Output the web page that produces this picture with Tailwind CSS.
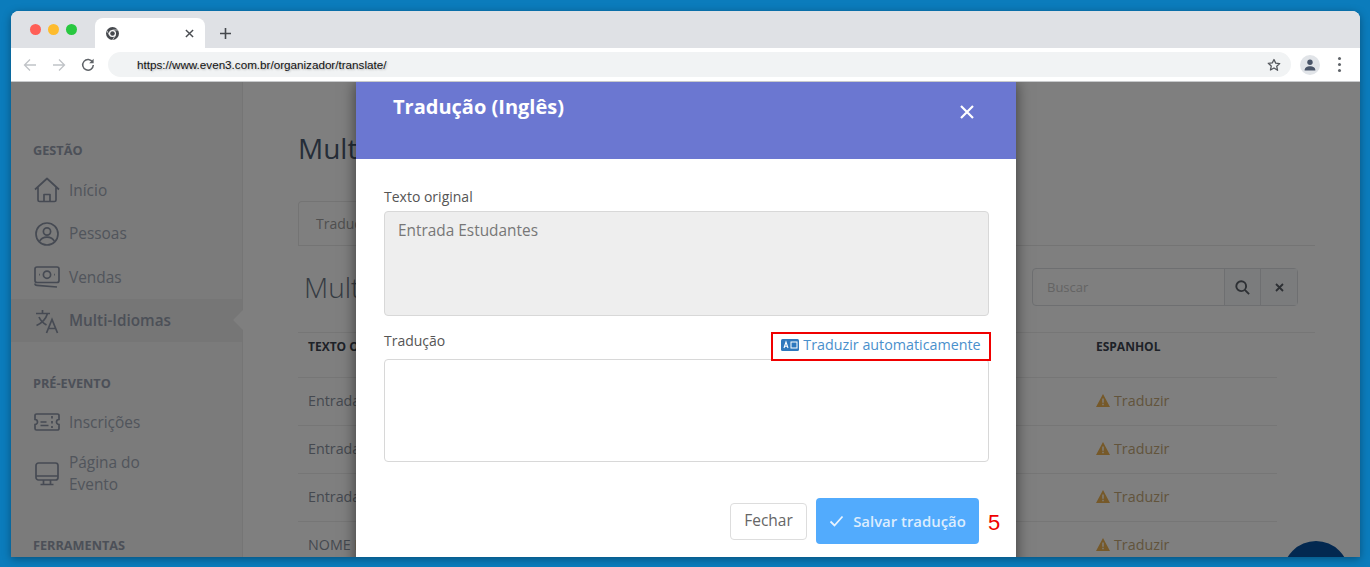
<!DOCTYPE html>
<html lang="pt-BR">
<head>
  <meta charset="UTF-8">
  <title>Even3 - Multi-Idiomas</title>
  <script src="https://cdn.jsdelivr.net/npm/@tailwindcss/browser@4"></script>
</head>
<body class="bg-[#0b7cbc] h-[567px] overflow-hidden pt-[11px] pl-[11px] pr-[10px] font-['Open_Sans',sans-serif]">

  <div class="relative h-[546px] flex flex-col overflow-hidden rounded-t-lg bg-white shadow-[0_2px_8px_rgba(0,0,0,0.35)]">

    <!-- abas do navegador -->
    <div class="h-[37px] shrink-0 bg-[#dfe1e5] flex items-end pr-px">
      <div class="h-full flex items-center gap-[7px] pl-[19px] pt-[1px] pb-[1px] -mt-1">
        <span class="w-[11px] h-[11px] rounded-full bg-[#ff5f57]"></span>
        <span class="w-[11px] h-[11px] rounded-full bg-[#febc2e]"></span>
        <span class="w-[11px] h-[11px] rounded-full bg-[#28c840]"></span>
      </div>
      <div class="ml-[18px] w-[110px] h-[30px] bg-white rounded-t-lg flex items-center justify-between pl-[11px] pr-[11px]">
        <svg class="w-[13px] h-[13px]" viewBox="0 0 24 24"><circle cx="12" cy="12" r="12" fill="#46494e"/><circle cx="12" cy="12" r="6.5" fill="#fff"/><circle cx="12" cy="12" r="4.2" fill="#46494e"/><path d="M12 5.5h11M6.4 15.3L1.5 6.5M17.6 15.3L12 24" stroke="#fff" stroke-width="1.2"/></svg>
        <svg class="w-[9px] h-[9px]" viewBox="0 0 10 10"><path d="M1 1l8 8M9 1l-8 8" stroke="#4a4d52" stroke-width="1.6"/></svg>
      </div>
      <div class="h-[30px] flex items-center ml-[15px]">
        <svg class="w-[11px] h-[11px]" viewBox="0 0 11 11"><path d="M5.5 0v11M0 5.5h11" stroke="#45484d" stroke-width="1.6"/></svg>
      </div>
    </div>

    <!-- barra de endereço -->
    <div class="h-[34px] shrink-0 bg-white border-b border-[#c8cacc] flex items-center pl-[12px] pr-[19px]">
      <svg class="w-[14px] h-[14px]" viewBox="0 0 14 14" fill="none"><path d="M13 7H1.5M7 1.5L1.5 7 7 12.5" stroke="#c0c3c7" stroke-width="1.3"/></svg>
      <svg class="w-[14px] h-[14px] ml-[15px]" viewBox="0 0 14 14" fill="none"><path d="M1 7h11.5M7 1.5L12.5 7 7 12.5" stroke="#c0c3c7" stroke-width="1.3"/></svg>
      <svg class="w-[14px] h-[14px] ml-[15px]" viewBox="0 0 14 14" fill="none"><path d="M11.6 4.2A5.3 5.3 0 1 0 12.3 7" stroke="#5f6368" stroke-width="1.5"/><path d="M12.6 0.8v4.4H8.2z" fill="#5f6368"/></svg>
      <div class="ml-[13px] flex-1 h-[25px] rounded-full bg-[#f1f3f4] flex items-center justify-between pl-[29px] pr-[10px]">
        <span class="font-['Liberation_Sans',sans-serif] text-[11.67px] text-[#111] [text-shadow:1px_1px_2px_rgba(0,0,0,0.25)]">https://www.even3.com.br/organizador/translate/</span>
        <svg class="w-[14px] h-[14px]" viewBox="0 0 24 24" fill="none"><path d="M12 2.5l2.9 6.3 6.9.8-5.1 4.7 1.4 6.8L12 17.1l-6.1 3.5 1.4-6.8-5.1-4.7 6.9-.8z" stroke="#55585d" stroke-width="2.2" stroke-linejoin="round"/></svg>
      </div>
      <div class="ml-[9px] w-[20px] h-[20px] rounded-full bg-[#e1e4e8] flex items-center justify-center">
        <svg class="w-[12px] h-[12px]" viewBox="0 0 12 12"><circle cx="6" cy="3.2" r="2.7" fill="#4a5568"/><path d="M.6 11.5c0-3 2.6-4.2 5.4-4.2s5.4 1.2 5.4 4.2z" fill="#4a5568"/></svg>
      </div>
      <div class="ml-[18px] flex flex-col gap-[3px]">
        <span class="w-[3px] h-[3px] rounded-full bg-[#5f6368]"></span>
        <span class="w-[3px] h-[3px] rounded-full bg-[#5f6368]"></span>
        <span class="w-[3px] h-[3px] rounded-full bg-[#5f6368]"></span>
      </div>
    </div>

    <!-- pagina -->
    <div class="relative flex-1 flex overflow-hidden bg-white">

      <aside class="w-[232px] shrink-0 bg-[#f6f6f6] border-r border-[#eaeaea] pt-[59px] text-[#a2aab8]">
        <p class="pl-[22px] h-[18px] leading-[18px] text-[12.7px] font-bold text-[#98a0b0] mb-[9.5px]">GESTÃO</p>

        <div class="h-[43.5px] flex items-center pl-[23px] gap-[9px] text-[15.4px]">
          <svg class="w-[26px] h-[26px] shrink-0" viewBox="0 0 26 26" fill="none" stroke="#8c95a6" stroke-width="1.7" stroke-linejoin="round"><path d="M1 12.5L13 1.5l12 11M4 10.5V23a1.5 1.5 0 0 0 1.5 1.5h15A1.5 1.5 0 0 0 22 23V10.5M10 24.5v-7h6v7"/></svg>
          Início
        </div>
        <div class="h-[43.5px] flex items-center pl-[23px] gap-[9px] text-[15.4px]">
          <svg class="w-[26px] h-[26px] shrink-0" viewBox="0 0 26 26" fill="none" stroke="#8c95a6" stroke-width="1.7"><circle cx="13" cy="13" r="11"/><circle cx="13" cy="10.5" r="3.6"/><path d="M5.5 20.5c1.5-3.2 4.3-4.4 7.5-4.4s6 1.2 7.5 4.4"/></svg>
          Pessoas
        </div>
        <div class="h-[43.5px] flex items-center pl-[23px] gap-[9px] text-[15.4px]">
          <svg class="w-[26px] h-[26px] shrink-0" viewBox="0 0 26 26" fill="none" stroke="#8c95a6" stroke-width="1.7"><rect x="1" y="3" width="24" height="15.5" rx="2"/><circle cx="13" cy="10.7" r="3.6"/><path d="M5 10.7h.8M20.2 10.7h.8M1 19.5c0 1.2.6 1.9 2 1.9l20 1.6"/></svg>
          Vendas
        </div>
        <div class="relative h-[43px] bg-[#ececec] flex items-center pl-[23px] gap-[9px] text-[15.3px] font-semibold text-[#98a0b0]">
          <svg class="w-[26px] h-[26px] shrink-0" viewBox="0 0 26 26" fill="none" stroke="#8c95a6" stroke-width="1.7"><path d="M2 5.5h14M8.5 2v3.5M13.5 5.5c-1.5 5-5.5 9.5-11 12M5 9c1.5 3.5 4 6 7.5 8M12.5 25l5.5-13.5L23.5 25M14.5 20.500h7"/></svg>
          Multi-Idiomas
          <span class="absolute right-[-8px] top-[14px] w-[14px] h-[14px] rotate-45 bg-white"></span>
        </div>

        <p class="mt-[32px] pl-[22px] h-[18px] leading-[18px] text-[12.7px] font-bold text-[#98a0b0] mb-[8.5px]">PRÉ-EVENTO</p>
        <div class="h-[43.5px] flex items-center pl-[23px] gap-[9px] text-[15.4px]">
          <svg class="w-[26px] h-[26px] shrink-0" viewBox="0 0 26 26" fill="none" stroke="#8c95a6" stroke-width="1.7"><path d="M2.5 5h21A1.5 1.5 0 0 1 25 6.5v4a2.5 2.5 0 0 0 0 5v4a1.5 1.5 0 0 1-1.5 1.5h-21A1.5 1.5 0 0 1 1 19.500v-4a2.500 2.500 0 0 0 0-5v-4A1.500 1.500 0 0 1 2.500 5zM18 7v2.500M18 12v2.500M18 17v2M6.500 13h6M6.500 16.500h8"/></svg>
          Inscrições
        </div>
        <div class="h-[44px] mt-[8px] flex items-center pl-[23px] gap-[9px] text-[15.4px] leading-[22px]">
          <svg class="w-[26px] h-[26px] shrink-0" viewBox="0 0 26 26" fill="none" stroke="#8c95a6" stroke-width="1.7"><rect x="2" y="2" width="22" height="17" rx="2.500"/><path d="M2 15h22M9.500 19v4M16.500 19v4M6.500 23.500h13"/></svg>
          <span>Página do<br>Evento</span>
        </div>

        <p class="mt-[39.5px] pl-[22px] h-[18px] leading-[18px] text-[12.7px] font-bold text-[#98a0b0]">FERRAMENTAS</p>
      </aside>

      <main class="flex-1 pl-[55px] pr-[45px] pt-[47px]">
        <h1 class="text-[28px] leading-[38px] text-[#4a5a70]">Multi-Idiomas</h1>

        <div class="mt-[35px] h-[44px] border-b border-[#e8e8e8] flex items-end">
          <div class="h-[44px] px-[17px] flex items-center border border-b-0 border-[#e8e8e8] rounded-t text-[14px] text-[#a0a0a0] bg-white">Tradução</div>
        </div>

        <div class="mt-[22px] h-[38px] flex items-center justify-between pr-[17px]">
          <h2 class="pl-[6px] text-[28px] font-light text-[#6b7685]">Multi-Idiomas</h2>
          <div class="w-[266px] h-[38px] flex border border-[#dcdfe2] rounded">
            <div class="flex-1 flex items-center pl-[14px] text-[13px] text-[#c8c8c8] pt-px">Buscar</div>
            <div class="w-[36px] flex items-center justify-center bg-[#f6f8fa] border-l border-[#dcdfe2]">
              <svg class="w-[15px] h-[15px]" viewBox="0 0 15 15" fill="none" stroke="#5b6068" stroke-width="1.900"><circle cx="6.200" cy="6.200" r="4.900"/><path d="M9.800 9.800l4.300 4.300"/></svg>
            </div>
            <div class="w-[37px] flex items-center justify-center bg-[#f6f8fa] border-l border-[#dcdfe2]">
              <svg class="w-[9px] h-[9px]" viewBox="0 0 9 9"><path d="M1 1l7 7M8 1L1 8" stroke="#5b6068" stroke-width="1.800"/></svg>
            </div>
          </div>
        </div>

        <div class="mt-[26px] border-t border-[#ececec] h-[45px] grid grid-cols-[788px_1fr] pl-[10px] pt-[5px] text-[12px] font-bold text-[#3c4450]">
          <span>TEXTO ORIGINAL</span>
          <span>ESPANHOL</span>
        </div>

        <div class="w-[979px] text-[14.3px] text-[#8a92a0]">
          <div class="h-[48px] grid grid-cols-[788px_1fr] pl-[10px] pb-[2px] items-center border-t border-[#ececec]">
            <span>Entrada Estudantes</span>
            <span class="flex items-center gap-[4px] text-[#c4a878]"><svg class="w-[14px] h-[13px]" viewBox="0 0 14 13"><path d="M7 0l7 13H0z" fill="#ecb252"/><path d="M7 4.500v4.200M7 9.800v1.500" stroke="#fff" stroke-width="1.400"/></svg>Traduzir</span>
          </div>
          <div class="h-[48px] grid grid-cols-[788px_1fr] pl-[10px] pb-[2px] items-center border-t border-[#ececec]">
            <span>Entrada Profissionais</span>
            <span class="flex items-center gap-[4px] text-[#c4a878]"><svg class="w-[14px] h-[13px]" viewBox="0 0 14 13"><path d="M7 0l7 13H0z" fill="#ecb252"/><path d="M7 4.500v4.200M7 9.800v1.500" stroke="#fff" stroke-width="1.400"/></svg>Traduzir</span>
          </div>
          <div class="h-[48px] grid grid-cols-[788px_1fr] pl-[10px] pb-[2px] items-center border-t border-[#ececec]">
            <span>Entrada Geral</span>
            <span class="flex items-center gap-[4px] text-[#c4a878]"><svg class="w-[14px] h-[13px]" viewBox="0 0 14 13"><path d="M7 0l7 13H0z" fill="#ecb252"/><path d="M7 4.500v4.200M7 9.800v1.500" stroke="#fff" stroke-width="1.400"/></svg>Traduzir</span>
          </div>
          <div class="h-[48px] grid grid-cols-[788px_1fr] pl-[10px] pb-[2px] items-center border-t border-[#ececec]">
            <span>NOME DO CAMPO</span>
            <span class="flex items-center gap-[4px] text-[#c4a878]"><svg class="w-[14px] h-[13px]" viewBox="0 0 14 13"><path d="M7 0l7 13H0z" fill="#ecb252"/><path d="M7 4.500v4.200M7 9.800v1.500" stroke="#fff" stroke-width="1.400"/></svg>Traduzir</span>
          </div>
        </div>
      </main>

      <!-- botao de chat -->
      <div class="absolute left-[1272px] top-[459px] w-[66px] h-[66px] rounded-full bg-[#0750a0]"></div>

      <!-- fundo escuro do modal -->
      <div class="absolute inset-0 bg-black/50"></div>

      <!-- modal -->
      <div class="absolute left-[345px] top-0 w-[660px] h-[500px] bg-white shadow-[0_0_14px_rgba(0,0,0,0.55)]">
        <div class="h-[77px] bg-[#6b77d1] flex justify-between pl-[37px] pr-[42px] text-white">
          <h3 class="mt-[11px] text-[20px] leading-[27px] font-bold">Tradução (Inglês)</h3>
          <svg class="mt-[23px] w-[14px] h-[14px]" viewBox="0 0 14 14"><path d="M1 1l12 12M13 1L1 13" stroke="#fff" stroke-width="2.200"/></svg>
        </div>

        <div class="pl-[28px] pr-[27px] pt-[28px] text-[14px] text-[#555]">
          <label class="block leading-[20px] mb-[4px]">Texto original</label>
          <div class="h-[105px] bg-[#eeeeee] border border-[#d8d8d8] rounded px-[13px] pt-[8px] text-[15.4px] text-[#777] leading-[22px]">Entrada Estudantes</div>

          <div class="mt-[15px] h-[28px] flex items-center justify-between">
            <label class="leading-[20px] -mt-[8px]">Tradução</label>
            <a class="relative z-10 -mr-[2px] h-[29px] w-[220px] border-2 border-[#f00000] flex items-center justify-center gap-[4px] text-[14.3px] text-[#4a90cc] bg-white -mb-[2px] pb-[3px]">
              <svg class="w-[18px] h-[12px]" viewBox="0 0 18 12"><rect width="18" height="12" rx="1.500" fill="#2f78bd"/><path d="M3 9l2-6 2 6M3.800 7.200h2.400" stroke="#fff" stroke-width="1.100" fill="none"/><rect x="10" y="3" width="6" height="6" fill="none" stroke="#fff" stroke-width="1"/></svg>
              Traduzir automaticamente
            </a>
          </div>
          <div class="h-[103px] bg-white border border-[#d8d8d8] rounded"></div>

          <div class="mt-[36px] flex justify-end items-center gap-[9px] pr-[10px]">
            <button class="w-[77px] h-[37px] border border-[#dddddd] rounded text-[15.5px] text-[#666] bg-white">Fechar</button>
            <div class="relative">
              <button class="w-[163px] h-[46px] rounded bg-[#52abfd] flex items-center justify-center gap-[9px] text-[14.9px] text-[#dcedfd] font-semibold">
                <svg class="w-[15px] h-[12px]" viewBox="0 0 15 12" fill="none"><path d="M1.500 6.500l4 4 8-9" stroke="#e8f3fe" stroke-width="1.800"/></svg>
                Salvar tradução
              </button>
              <span class="absolute left-[172px] top-[12px] font-['Liberation_Sans',sans-serif] text-[22px] leading-[26px] text-[#f00000]">5</span>
            </div>
          </div>
        </div>
      </div>
    </div>
  </div>
</body>
</html>
